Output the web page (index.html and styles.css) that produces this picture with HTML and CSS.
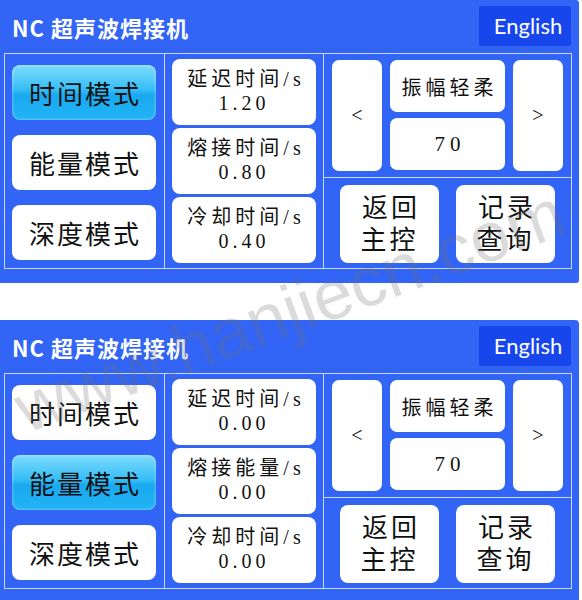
FILE: index.html
```html
<!DOCTYPE html>
<html lang="zh-CN">
<head>
    <meta charset="UTF-8">
    <meta name="viewport" content="width=device-width, initial-scale=1.0">
    <title>NC 超声波焊接机</title>
    <link rel="stylesheet" href="styles.css">
</head>
<body>
    <div class="panel">
        <div class="header">
            <div class="title">NC 超声波焊接机</div>
            <div class="lang">English</div>
        </div>
        <div class="frame">
            <div class="modes">
                <div class="mode active">时间模式</div>
                <div class="mode">能量模式</div>
                <div class="mode">深度模式</div>
            </div>
            <div class="params">
                <div class="param">延迟时间/s<br><span class="num">1.20</span></div>
                <div class="param">熔接时间/s<br><span class="num">0.80</span></div>
                <div class="param">冷却时间/s<br><span class="num">0.40</span></div>
            </div>
            <div class="controls">
                <div class="amp">
                    <div class="arrow">&lt;</div>
                    <div class="amp-mid">
                        <div class="amp-box">振幅轻柔</div>
                        <div class="amp-box value">70</div>
                    </div>
                    <div class="arrow">&gt;</div>
                </div>
                <div class="actions">
                    <div class="action">返回<br>主控</div>
                    <div class="action">记录<br>查询</div>
                </div>
            </div>
        </div>
    </div>

    <div class="panel second">
        <div class="header">
            <div class="title">NC 超声波焊接机</div>
            <div class="lang">English</div>
        </div>
        <div class="frame">
            <div class="modes">
                <div class="mode">时间模式</div>
                <div class="mode active">能量模式</div>
                <div class="mode">深度模式</div>
            </div>
            <div class="params">
                <div class="param">延迟时间/s<br><span class="num">0.00</span></div>
                <div class="param">熔接能量/s<br><span class="num">0.00</span></div>
                <div class="param">冷却时间/s<br><span class="num">0.00</span></div>
            </div>
            <div class="controls">
                <div class="amp">
                    <div class="arrow">&lt;</div>
                    <div class="amp-mid">
                        <div class="amp-box">振幅轻柔</div>
                        <div class="amp-box value">70</div>
                    </div>
                    <div class="arrow">&gt;</div>
                </div>
                <div class="actions">
                    <div class="action">返回<br>主控</div>
                    <div class="action">记录<br>查询</div>
                </div>
            </div>
        </div>
    </div>

    <div class="watermark">www.hanjiecn.com</div>
</body>
</html>
```

FILE: styles.css
```css
body {
    margin: 0;
    width: 582px;
    height: 600px;
    overflow: hidden;
    background-color: #fff;
    font-family: "Liberation Serif", "Noto Sans CJK SC", serif;
    color: #111;
    position: relative;
}

.panel {
    width: 579px;
    height: 283px;
    background-color: #3264f6;
    border-radius: 0 3px 3px 0;
    box-sizing: border-box;
    padding: 0 7px 0 4px;
}

.panel.second {
    margin-top: 37px;
    border-radius: 0 4px 0 0;
}

.header {
    height: 53px;
    display: flex;
    align-items: center;
    justify-content: space-between;
    padding-left: 8px;
}

.title {
    font-family: "Noto Sans CJK SC", sans-serif;
    font-weight: bold;
    font-size: 22px;
    letter-spacing: 1px;
    color: #fff;
    margin-top: 1px;
}

.lang {
    font-family: Lato, "Noto Sans", sans-serif;
    font-size: 22px;
    color: #fff;
    background-color: #1646ec;
    border-radius: 3px;
    width: 92px;
    height: 40px;
    line-height: 40px;
    text-align: center;
    padding-left: 6px;
    box-sizing: border-box;
    margin-right: 1px;
    margin-top: -1px;
}

.frame {
    height: 216px;
    box-sizing: border-box;
    border: 1px solid #c9d8ff;
    display: flex;
}

.modes {
    width: 160px;
    border-right: 1px solid #c9d8ff;
    display: flex;
    flex-direction: column;
    gap: 15px;
    padding: 11px 0 0 7px;
    box-sizing: border-box;
}

.mode {
    width: 144px;
    height: 55px;
    background-color: #fff;
    border-radius: 8px;
    display: flex;
    align-items: center;
    justify-content: center;
    font-size: 26px;
    letter-spacing: 2px;
    text-indent: 2px;
}

.mode.active {
    background: linear-gradient(#7edcfd, #35bdf6 45%, #1aa9f0 55%, #22b3f6);
    box-shadow: inset 0 0 3px rgba(255, 255, 255, 0.6);
}

.params {
    width: 159px;
    border-right: 1px solid #c9d8ff;
    display: flex;
    flex-direction: column;
    gap: 3px;
    padding: 5px 0 0 7px;
    box-sizing: border-box;
}

.param {
    width: 144px;
    height: 66px;
    background-color: #fff;
    border-radius: 8px;
    text-align: center;
    font-size: 20px;
    line-height: 24px;
    letter-spacing: 4px;
    text-indent: 4px;
    padding-top: 8px;
    box-sizing: border-box;
}

.num {
    letter-spacing: 4px;
}

.controls {
    flex: 1;
    display: flex;
    flex-direction: column;
}

.amp {
    height: 124px;
    border-bottom: 1px solid #c9d8ff;
    display: flex;
    gap: 8px;
    padding: 6px 0 0 8px;
    box-sizing: border-box;
}

.arrow {
    width: 50px;
    height: 111px;
    background-color: #fff;
    border-radius: 7px;
    display: flex;
    align-items: center;
    justify-content: center;
    font-size: 20px;
}

.amp-mid {
    width: 115px;
    display: flex;
    flex-direction: column;
    gap: 6px;
}

.amp-box {
    height: 52px;
    background-color: #fff;
    border-radius: 7px;
    display: flex;
    align-items: center;
    justify-content: center;
    font-size: 20px;
    letter-spacing: 4px;
    text-indent: 4px;
}

.amp-box.value {
    font-size: 21px;
    letter-spacing: 5px;
    text-indent: 5px;
}

.actions {
    display: flex;
    justify-content: center;
    gap: 17px;
    padding-top: 7px;
}

.action {
    width: 99px;
    height: 78px;
    background-color: #fff;
    border-radius: 8px;
    text-align: center;
    font-size: 26px;
    line-height: 32px;
    letter-spacing: 3px;
    text-indent: 3px;
    padding-top: 8px;
    box-sizing: border-box;
}

.watermark {
    position: absolute;
    left: 18px;
    top: 371px;
    font-family: "Liberation Sans", Arial, sans-serif;
    font-size: 70px;
    color: rgba(110, 110, 110, 0.25);
    transform: rotate(-20.3deg);
    transform-origin: left center;
    white-space: nowrap;
    pointer-events: none;
}
```
